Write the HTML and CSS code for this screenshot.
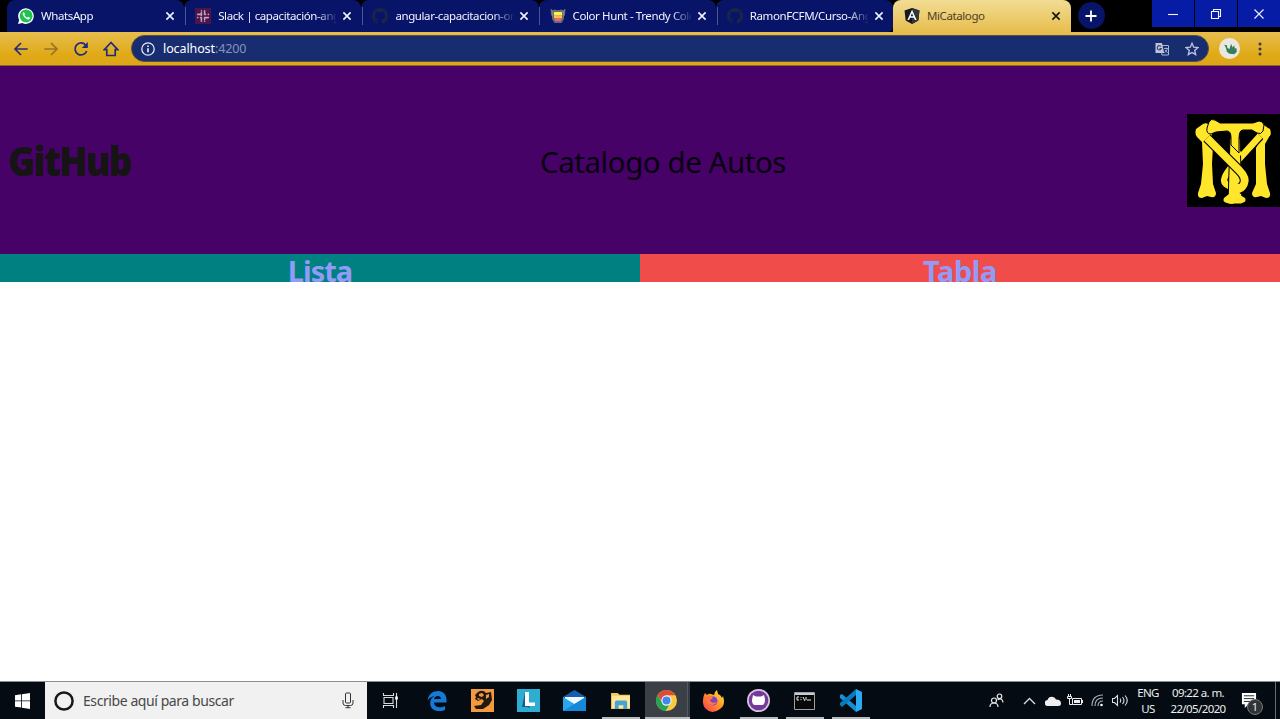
FILE: index.html
```html
<!DOCTYPE html>
<html lang="es">
<head>
<meta charset="utf-8">
<title>MiCatalogo</title>
<link rel="stylesheet" href="styles.css">
</head>
<body>
<svg class="defs" width="0" height="0" aria-hidden="true">
  <symbol id="close" viewBox="0 0 10 10"><path d="M1.4 1.4l7.2 7.2M8.6 1.4L1.4 8.6" fill="none" stroke="currentColor" stroke-width="1.6"/></symbol>
  <symbol id="cat" viewBox="0 0 16 16"><path fill="currentColor" d="M8 0C3.58 0 0 3.58 0 8c0 3.54 2.29 6.53 5.47 7.59.4.07.55-.17.55-.38v-1.49c-2.01.37-2.53-.49-2.69-.94-.09-.23-.48-.94-.82-1.13-.28-.15-.68-.52-.01-.53.63-.01 1.08.58 1.23.82.72 1.21 1.87.87 2.33.66.07-.52.28-.87.51-1.07-1.78-.2-3.64-.89-3.64-3.95 0-.87.31-1.59.82-2.15-.08-.2-.36-1.02.08-2.12 0 0 .67-.21 2.2.82a7.6 7.6 0 014 0c1.53-1.04 2.2-.82 2.2-.82.44 1.1.16 1.92.08 2.12.51.56.82 1.27.82 2.15 0 3.07-1.87 3.75-3.65 3.95.29.25.54.73.54 1.48v2.2c0 .21.15.46.55.38A8 8 0 0016 8c0-4.42-3.58-8-8-8z"/></symbol>
</svg>

<div class="tabstrip">
  <div class="tab">
    <svg class="favicon" viewBox="0 0 16 16"><path d="M0 16l1.200-4A7.800 7.800 0 1 1 4.300 15z" fill="#fff"/><circle cx="8.100" cy="7.900" r="6.500" fill="#20c34e"/><path d="M5.600 4.200c-1 .5-1.200 1.800-.5 3.100 1 2 2.500 3.400 4.500 4.100 1.300.4 2.500-.4 2.500-1.600L10.200 8.700l-1 1.100C8 9.300 7 8.300 6.400 7.100l.8-1z" fill="#fff"/></svg>
    <span class="tab-title">WhatsApp</span><svg class="x"><use href="#close"/></svg>
  </div>
  <div class="tab">
    <svg class="favicon" viewBox="0 0 16 16"><path d="M0 0h16v16H0z" fill="#4a154b"/><g fill="none" stroke="#c09fb9" stroke-width="1.600" stroke-linecap="round"><path d="M6.400 4.500v3M2.700 6.400h3.700M9.600 2.700v3.700M9.600 6.400h.9M6.400 9.600v3.700M5.500 9.600h.9M9.600 9.600h3.700M9.600 9.600v1.900M6.400 2.700h.1M13.300 6.400h.1M2.700 9.600h.1M9.600 13.300h.1"/></g></svg>
    <span class="tab-title">Slack | capacitación-angular</span><svg class="x"><use href="#close"/></svg>
  </div>
  <div class="tab">
    <svg class="favicon octo"><use href="#cat"/></svg>
    <span class="tab-title">angular-capacitacion-online</span><svg class="x"><use href="#close"/></svg>
  </div>
  <div class="tab">
    <svg class="favicon" viewBox="0 0 16 16"><path d="M2 2h12v9l-2.500 4h-7L2 11z" fill="#666b78"/><path d="M1 1l2 3v5L1.500 7zM15 1l-2 3v5l1.500-2zM4.500 1l1 2M11.500 1l-1 2" fill="#8d9197" stroke="#777" stroke-width=".6"/><path d="M4 4h8v3.500H4z" fill="#fff04c"/><path d="M4 7.500h8V10H4z" fill="#ffc044"/><path d="M4 10h8l-1.500 3h-5z" fill="#ef6576"/></svg>
    <span class="tab-title">Color Hunt - Trendy Color Palettes</span><svg class="x"><use href="#close"/></svg>
  </div>
  <div class="tab">
    <svg class="favicon octo"><use href="#cat"/></svg>
    <span class="tab-title">RamonFCFM/Curso-Angular</span><svg class="x"><use href="#close"/></svg>
  </div>
  <div class="tab active">
    <svg class="favicon" viewBox="0 0 16 16"><path d="M8 0l7.500 2.600-1.200 10L8 16l-6.300-3.400-1.200-10z" fill="#15181c"/><path d="M8 0l7.500 2.600-1.200 10L8 16z" fill="#30353b"/><path d="M8 1.800L3.400 12h1.700l1-2.300h3.800l1 2.300h1.700zm0 3.400l1.300 3.100H6.700z" fill="#fff"/></svg>
    <span class="tab-title">MiCatalogo</span><svg class="x"><use href="#close"/></svg>
  </div>
  <div class="newtab"><svg width="12" height="12" viewBox="0 0 12 12"><path d="M6 .5v11M.5 6h11" stroke="#fff" stroke-width="1.800"/></svg></div>
  <div class="winbtns">
    <div><svg viewBox="0 0 12 12"><path d="M1 6.500h10"/></svg></div>
    <div><svg viewBox="0 0 12 12"><path d="M1.500 3.500h7v7h-7zM3.500 3.500v-2h7v7h-2"/></svg></div>
    <div><svg viewBox="0 0 12 12"><path d="M1.500 1.500l9 9M10.500 1.500l-9 9"/></svg></div>
  </div>
</div>

<div class="toolbar">
  <svg class="nav-icon" viewBox="0 0 16 16"><path d="M14.700 8H2.500M8 2L2 8l6 6"/></svg>
  <svg class="nav-icon forward" viewBox="0 0 16 16"><path d="M1.300 8h12.200M8 2l6 6-6 6"/></svg>
  <svg class="nav-icon" viewBox="0 0 16 16"><path d="M13.700 10A6 6 0 1 1 12.600 4L14 5.500"/><path d="M14.800 1v6H8.800z" fill="#232c78" stroke="none"/></svg>
  <svg class="nav-icon" viewBox="0 0 16 16"><path d="M8 1.500L1.300 8.700H3.800V14.500h8.400V8.700h2.500z"/></svg>
  <div class="omnibox">
    <svg class="info" viewBox="0 0 14 14"><circle cx="7" cy="7" r="6.200" fill="none" stroke="#e4e9f6" stroke-width="1.300"/><path d="M7 6.200v4M7 3.500v1.500" stroke="#fff" stroke-width="1.500"/></svg>
    <span class="url">localhost<span>:4200</span></span>
    <svg class="translate" viewBox="0 0 14 14"><path d="M5 3.500h8.500v9.500H7z" fill="none" stroke="#aeb7cd"/><path d="M.5 1h6.500l2.200 10H.5z" fill="#bdc4d4"/><path d="M6 4.500A2.100 2.100 0 1 0 6.300 6.500H4.500" fill="none" stroke="#34457f" stroke-width="1.100"/><path d="M9 6.500h4M11 5.500v1M12.300 6.500c-.4 2-1.500 3.500-3 4.200M10 8l2.600 3" fill="none" stroke="#aeb7cd" stroke-width=".9"/></svg>
    <svg class="star" viewBox="0 0 14 14"><path d="M7 1.300l1.700 3.900 4.200.4-3.200 2.800 1 4.200L7 10.400l-3.700 2.200 1-4.200L1.100 5.600l4.200-.4z" fill="none" stroke="#bfc8dd" stroke-width="1.300"/></svg>
  </div>
  <svg class="avatar" viewBox="0 0 20 20"><circle cx="10" cy="10" r="10" fill="#e9e8df"/><path d="M5 6.500l2.500.5.500 2.500 2 1 1.500-5L13 9l1.500-2 .5 3 1.500-.5.5 3.500-2.500 2.500-4.500-.5-2.500-2L6.500 9z" fill="#367c5e"/></svg>
  <svg class="kebab" viewBox="0 0 4 14"><circle cx="2" cy="2" r="1.500"/><circle cx="2" cy="7" r="1.500"/><circle cx="2" cy="12" r="1.500"/></svg>
</div>

<header class="hero">
  <div class="brand"><span>GitHub</span></div>
  <h1>Catalogo de Autos</h1>
  <svg class="monogram" viewBox="0 0 93 93">
    <path d="M0 0h93v93H0z" fill="#000"/>
    <g fill="#ffe62b">
      <path d="M9 15l7-5q5-2 7 2l2 9-3 5 4 6-1 18 1 20 3 9q0 5-5 4l-4-1-5 2q-5 0-4-5l3-9 2-20-1-22-3-3q-5-4-3-10z"/>
      <path d="M81 14l-4-3q-5-1-5 3l-3 9 3 5-3 6v36l-4 9q0 5 5 4l4-1 5 2q5 0 4-5l-3-9-2-20V30l4-7q3-3 1-8z"/>
    </g>
    <g fill="none" stroke-linejoin="round">
      <path d="M73 22L43 55Q35 65 38 69T52 75" stroke="#000" stroke-width="9"/>
      <path d="M73 22L43 55Q35 65 38 69T52 75" stroke="#ffe62b" stroke-width="6.500"/>
      <path d="M43 24l-2 66h14l-2-66z" fill="#ffe62b" stroke="#000" stroke-width="1"/>
      <path d="M43 48L53 37" stroke="#ffe62b" stroke-width="7"/>
      <path d="M20 24L52 56Q60 64 57 70T49 75" stroke="#000" stroke-width="10"/>
      <path d="M20 24L52 56Q60 64 57 70T49 75" stroke="#ffe62b" stroke-width="7.800"/>
    </g>
    <path d="M22 8q2-4 6-2l5 3h33l6-2q4 0 5 4l-1 6q-2 4-6 2l-5-3H56q-4 0-4 9v14l-8-8v-7q0-7-4-7l-11 1-5 2q-5 0-4-6z" fill="#ffe62b" stroke="#000" stroke-width="1"/>
    <path d="M43 70h9l1 11 5 3q2 4-3 5l-5-1-5 2-5-1q-5-1-3-5l5-4z" fill="#ffe62b"/>
  </svg>
</header>
<nav class="sections">
  <a class="lista">Lista</a>
  <a class="tabla">Tabla</a>
</nav>
<main></main>

<footer class="taskbar">
  <div class="start"><svg width="15" height="16" viewBox="0 0 15 16"><path d="M0 2.200l6.200-.9v6.200H0zM7 1.200L15 0v7.500H7zM0 8.300h6.200v6.300L0 13.700zM7 8.300h8V16l-8-1.200z" fill="#fff"/></svg></div>
  <div class="search">
    <svg width="20" height="20" viewBox="0 0 20 20"><circle cx="10" cy="10" r="8.600" fill="none" stroke="#16181a" stroke-width="2.500"/></svg>
    <span>Escribe aquí para buscar</span>
    <svg width="12" height="17" viewBox="0 0 12 17"><rect x="3.500" y="1" width="5" height="10" rx="1" fill="none" stroke="#333"/><path d="M1 8v3q0 2.500 2.500 2.500h5Q11 13.500 11 11V8M6 14v2M3.500 15.700h5" fill="none" stroke="#333"/></svg>
  </div>
  <div class="apps">
    <div class="app"><svg width="18" height="18" viewBox="0 0 18 18" fill="none" stroke="#d9dbde" stroke-width="1.100"><path d="M2 5.500h9v6H2zM1.500 1v2.500h10V1M1.500 16v-2.500h10V16M14.500 1v15"/><path d="M13.200 4.500h2.600v3h-2.600z" fill="#fff" stroke="none"/></svg></div>
    <div class="app"><svg width="20" height="20" viewBox="0 0 20 20"><path d="M.5 9.500C1.500 3 6 0 11 0c6 0 8.500 4.500 8.500 8.500v3H7c.3 5 7 6 11 3.500v4c-6.500 3-15 .5-14.800-7 .1-3.600 2-6 4.400-7.300C5 5.300 2 7 .5 9.500zM7 8h7c0-4-6-4-7 0z" fill="#127bd8"/></svg></div>
    <div class="app"><svg width="23" height="23" viewBox="0 0 23 23"><path d="M0 0h23v23H0z" fill="#f39a3f"/><path d="M7 3q5-3 8 1l5-1 1 8-3 5-6 4H5l-2-3 7-1 3-4-2-2-4 2-3-2 1-2-1-2z" fill="#221910"/><path d="M8 5l3-1 2 2-2 2-3-1zM15 6l3-1v3l-3 2zM6 9l4 1-3 1z" fill="#f39a3f"/></svg></div>
    <div class="app"><svg width="23" height="23" viewBox="0 0 23 23"><path d="M0 0h23v23H0z" fill="#2baed2"/><path d="M8 3L5 18h5l3 1z" fill="#145c91"/><path d="M8 3h4v10.500h6V17H8z" fill="#fff"/></svg></div>
    <div class="app"><svg width="23" height="21" viewBox="0 0 23 21"><path d="M0 7L11.500 0 23 7v4H0z" fill="#1261b0"/><path d="M2 7h19v8H2z" fill="#f2f8ff"/><path d="M0 7l11.500 7L23 7v14H0z" fill="#28a7ed"/><path d="M0 21L23 7v14z" fill="#1688d9"/></svg></div>
    <div class="app open"><svg width="20" height="18" viewBox="0 0 21 19"><path d="M0 1h7l2 2h11v15H0z" fill="#f3ca58"/><path d="M1 4h19v13H1z" fill="#ffe69a"/><path d="M4 18v-7q0-2 2-2h9q2 0 2 2v7h-4v-4H8v4z" fill="#47a5d3"/></svg></div>
    <div class="app open current"><svg width="21" height="21" viewBox="0 0 22 22"><circle cx="11" cy="11" r="11" fill="#f8cb3f"/><path d="M1.500 5.500A11 11 0 0 1 20.500 5.500H11L7 13z" fill="#dc4b3e"/><path d="M1.500 5.500L7 14h8l-5 8A11 11 0 0 1 1.500 5.500z" fill="#25a35a"/><circle cx="11" cy="11" r="5.400" fill="#f5f5f5"/><circle cx="11" cy="11" r="4.200" fill="#4286ef"/></svg></div>
    <div class="app"><svg width="22" height="22" viewBox="0 0 22 22"><defs><linearGradient id="ff" x1="1" y1="0" x2="0" y2="1"><stop stop-color="#fff04a"/><stop offset=".45" stop-color="#ff9822"/><stop offset="1" stop-color="#ff315d"/></linearGradient></defs><path d="M2 5l1-2 2 2q2-2 4-1l3 1q0-3 3-5l1 4q3 1 4 4l1-2q3 9-3 13-8 6-14 0-5-5-2-14z" fill="url(#ff)"/><circle cx="11" cy="11" r="4.500" fill="#8140ce"/><path d="M4 7q4-3 7 1l-3 2q1 4 7 2-3 5-8 2-3-3-3-7z" fill="#ff7937"/></svg></div>
    <div class="app open"><svg width="23" height="23" viewBox="0 0 23 23"><circle cx="11.500" cy="11.500" r="11.500" fill="#d9c4e2"/><circle cx="11.500" cy="11.500" r="9.800" fill="#74399a"/><path d="M6 6l3 1.500h5L17 6l1 4q0 6-3 6H8Q5 16 5 11z" fill="#fff"/></svg></div>
    <div class="app open"><svg width="21" height="18" viewBox="0 0 21 18"><path d="M.5.500h20v17H.5z" fill="#080808" stroke="#9ca1a5"/><path d="M1 1h19v2H1z" fill="#c9cbcc"/><path d="M5 5H3v3h2M7 5v.8M7 7v1M9 5l2 4M12 5v3M13 8h4" stroke="#eee" fill="none"/></svg></div>
    <div class="app open"><svg width="23" height="23" viewBox="0 0 23 23"><path d="M1 6l2-1 14 12v6L1 9z" fill="#168ed2"/><path d="M1 16l2 2L17 6V0L1 14z" fill="#087bc0"/><path d="M17 0l6 3v17l-6 3z" fill="#2ba9f1"/></svg></div>
  </div>
  <div class="tray">
    <div class="people"><svg width="15" height="15" viewBox="0 0 15 15" fill="none" stroke="#e8e8e8" stroke-width="1.200"><circle cx="5" cy="7.500" r="2.500"/><path d="M1 14q0-4 4-4t4 4"/><circle cx="10.500" cy="3.300" r="2.300"/><path d="M8.500 6.800q5-2.500 5.500 2.700"/></svg></div>
    <div><svg width="13" height="8" viewBox="0 0 13 8"><path d="M1 7l5.500-5.500L12 7" fill="none" stroke="#ddd" stroke-width="1.300"/></svg></div>
    <div><svg width="16" height="10" viewBox="0 0 16 10"><path d="M3 10a3 3 0 0 1-.5-6Q4 0 8 1q2 0 3 2.500 5 0 5 4Q16 10 13 10z" fill="#eee"/></svg></div>
    <div><svg width="16" height="13" viewBox="0 0 16 13"><path d="M1.500 0v2M3.500 0v2M.5 2.500h4v2h-4zM2.500 5v5.500h3" fill="none" stroke="#eee"/><path d="M5.500 4.500h9v6h-9zM15.500 6v3" fill="none" stroke="#eee"/><path d="M7 6h6v3H7z" fill="#eee"/></svg></div>
    <div><svg width="13" height="13" viewBox="0 0 13 13" fill="none" stroke="#a9adb0" stroke-width="1.200"><path d="M1 12Q1 1 12 1M4 12q0-8 8-8M7 12q0-5 5-5"/><circle cx="10.500" cy="11" r="1.300" fill="#fff" stroke="none"/></svg></div>
    <div><svg width="17" height="13" viewBox="0 0 17 13" fill="none" stroke="#ddd" stroke-width="1.100"><path d="M.5 4.500h2l3-3v10l-3-3h-2zM8 4.500q1.500 2 0 4M10.500 3q3 3.500 0 7M13 1.500q4.500 5 0 10"/></svg></div>
    <div class="lang"><span>ENG</span><span>US</span></div>
    <div class="clock"><span class="time">09:22 a. m.</span><span class="date">22/05/2020</span></div>
    <div class="notice"><svg width="16" height="17" viewBox="0 0 17 18"><path d="M1 1h15v12H8l-4 4v-4H1z" fill="#fff"/><path d="M3 4h11M3 7h11M3 10h7" stroke="#1a1d20"/></svg><b>1</b></div>
  </div>
</footer>
</body>
</html>
```
FILE: styles.css
```css
* { box-sizing: border-box; }
body { margin: 0; width: 1280px; height: 719px; overflow: hidden; display: flex; flex-direction: column; background: #fff; font-family: "Noto Sans", "Open Sans", sans-serif; }
svg { display: block; flex: none; }
.defs { position: absolute; }

.tabstrip { height: 32px; flex: none; display: flex; background: #000; padding-left: 7px; }
.tab { width: 177.200px; flex: none; height: 32px; display: flex; align-items: center; padding: 0 9px 0 11px; background: #081468; border-radius: 8px 8px 0 0; color: #f1f3ff; position: relative; }
.tab + .tab:not(.active)::before { content: ""; position: absolute; left: .8px; top: 7px; width: 1px; height: 18px; background: #4b568f; }
.tab:nth-child(5) { border-bottom-right-radius: 5px; }
.favicon { width: 16px; height: 16px; }
.octo { color: #1b2547; }
.tab-title { width: 118px; margin-left: 7px; margin-right: 6px; font-size: 11.500px; line-height: 20px; white-space: nowrap; overflow: hidden; letter-spacing: -.4px; }
.tab:not(.active) .tab-title { -webkit-mask-image: linear-gradient(90deg, #000 98px, transparent 120px); mask-image: linear-gradient(90deg, #000 98px, transparent 120px); }
.x { width: 10px; height: 10px; }
.active { background: linear-gradient(#f2dc94, #e7be4e); color: #4d4025; width: 178px; }
.active .x { color: #171307; }
.newtab { width: 27px; height: 27px; border-radius: 50%; background: #081468; margin: 2px 0 0 7px; display: flex; align-items: center; justify-content: center; }
.winbtns { display: flex; gap: 1px; margin-left: auto; height: 27px; }
.winbtns div { width: 42px; display: flex; align-items: center; justify-content: center; background: #061ca5; }
.winbtns svg { width: 12px; height: 12px; fill: none; stroke: #f2f3ff; stroke-width: 1.100; }

.toolbar { height: 34px; flex: none; display: flex; align-items: center; padding: 0 18px 0 12.500px; background: linear-gradient(#e6bd4f, #e0aa16 70%, #dca51b); border-bottom: 1px solid #8e651c; }
.nav-icon { width: 16px; height: 16px; margin-right: 14px; fill: none; stroke: #232c78; stroke-width: 1.700; }
.forward { stroke: #99712d; }
.omnibox { width: 1078px; height: 27px; flex: none; margin-left: -1.500px; display: flex; align-items: center; padding: 0 9px; background: #182c70; border-radius: 14px; border: 1px solid #574d4b; }
.info { width: 14px; height: 14px; margin-right: 8px; }
.url { font-size: 12.500px; line-height: 20px; color: #fff; letter-spacing: -.1px; margin-right: auto; }
.url span { color: #8793b9; }
.translate { width: 14px; height: 14px; margin-right: 16px; }
.star { width: 14px; height: 14px; }
.avatar { width: 21px; height: 21px; margin-left: 10px; }
.kebab { width: 4px; height: 14px; margin-left: 18px; fill: #383557; }

.hero { height: 188px; flex: none; display: flex; justify-content: space-between; align-items: center; background: #460266; }
.brand { width: 139px; padding-left: 8px; font: 800 41px/54px "Open Sans", sans-serif; color: #171416; letter-spacing: -1.900px; }
.brand span { display: inline-block; transform: scaleX(.9); transform-origin: left; }
.hero h1 { margin: 4px 0 0; font-size: 29.500px; line-height: 40px; font-weight: 400; color: #080010; white-space: nowrap; letter-spacing: -.45px; }
.monogram { width: 93px; height: 93px; }
.sections { height: 28px; flex: none; display: flex; overflow: hidden; }
.sections a { flex: 1; text-align: center; font-size: 29px; line-height: 33px; font-weight: 700; color: #929bf8; }
.lista { background: #008080; letter-spacing: -1px; }
.tabla { background: #f04c4a; letter-spacing: -.4px; }
main { flex: 1; }

.taskbar { height: 38px; flex: none; display: flex; background: #050b12; border-top: 1px solid #8b8e91; }
.start { width: 45px; display: flex; justify-content: center; align-items: center; }
.search { width: 322px; display: flex; align-items: center; padding: 0 13px 0 9px; background: #f1f1f1; }
.search span { margin: 0 auto 0 9px; font-size: 14px; color: #484848; letter-spacing: -.42px; }
.apps { display: flex; padding-left: .6px; }
.app { width: 46px; display: flex; align-items: center; justify-content: center; position: relative; }
.open::after { content: ""; position: absolute; bottom: 0; left: 4px; width: 38px; height: 2px; background: #b8bbbe; }
.current { background: linear-gradient(90deg, transparent 1.400px, #3b3f46 1.400px 43px, #555960 43px 44px, #34383f 44px); }
.current::after { left: 1.400px; width: 44.600px; }
.tray { display: flex; margin-left: auto; border-right: 1px solid #666b70; margin-right: 4px; color: #eee; }
.tray > div { width: 22.700px; display: flex; align-items: center; justify-content: center; }
.tray .people { margin-right: 11px; }
.tray .lang, .tray .clock { flex-direction: column; font-size: 11.500px; line-height: 16px; letter-spacing: -.6px; white-space: nowrap; }
.tray .lang { width: 32px; }
.tray .clock { width: 68px; }
.tray .notice { width: 43px; position: relative; padding-right: 9px; }
.notice b { position: absolute; right: 12px; bottom: 4px; width: 16px; height: 16px; border: 1px solid #777; border-radius: 50%; background: #303337; font: 11px/13px "Noto Sans", sans-serif; text-align: center; }
```
